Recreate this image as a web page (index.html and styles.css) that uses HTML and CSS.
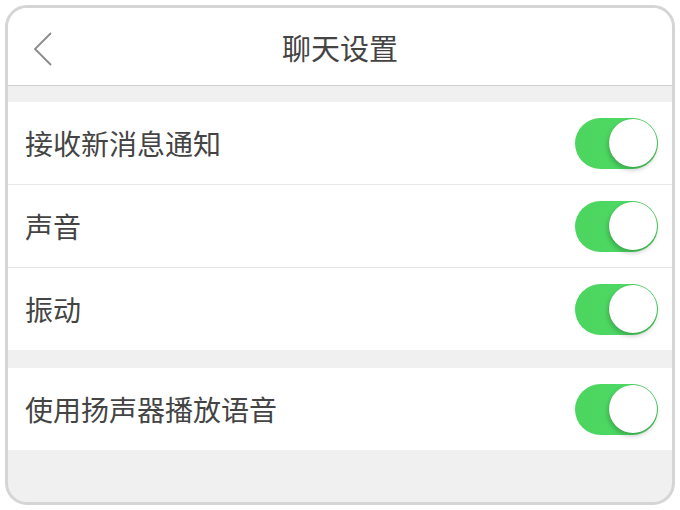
FILE: index.html
```html
<!DOCTYPE html>
<html lang="zh">
<head>
<meta charset="utf-8">
<link rel="stylesheet" href="styles.css">
</head>
<body>
<div class="phone">
  <header class="nav">
    <span class="back">
      <svg width="20" height="34" viewBox="0 0 20 34"><polyline points="18,1 2,17 18,33" fill="none" stroke="#8a8a8a" stroke-width="1.8"/></svg>
    </span>
    <h1 class="title">聊天设置</h1>
  </header>
  <div class="gap"></div>
  <div class="group">
    <div class="row"><span class="label">接收新消息通知</span><span class="switch"><span class="knob"></span></span></div>
    <div class="row"><span class="label">声音</span><span class="switch"><span class="knob"></span></span></div>
    <div class="row"><span class="label">振动</span><span class="switch"><span class="knob"></span></span></div>
  </div>
  <div class="gap gap2"></div>
  <div class="group">
    <div class="row"><span class="label">使用扬声器播放语音</span><span class="switch"><span class="knob"></span></span></div>
  </div>
</div>
</body>
</html>
```

FILE: styles.css
```css
html, body {
  margin: 0;
  padding: 0;
  background: #ffffff;
}
body {
  padding: 5px;
  font-family: "Noto Sans CJK SC", "Noto Sans", sans-serif;
}
.phone {
  width: 670px;
  height: 500px;
  box-sizing: border-box;
  border: 3px solid #d5d5d5;
  border-radius: 22px;
  overflow: hidden;
  background: #f0f0f0;
  display: flex;
  flex-direction: column;
}
.nav {
  height: 77px;
  flex: none;
  background: #ffffff;
  border-bottom: 1px solid #cfcfcf;
  display: flex;
  align-items: center;
  justify-content: center;
  position: relative;
}
.back {
  position: absolute;
  left: 25px;
  top: 24px;
  display: flex;
}
.title {
  margin: 0;
  font-size: 29px;
  font-weight: normal;
  color: #444444;
  line-height: 1;
  padding-top: 2px;
}
.gap {
  height: 16px;
  flex: none;
}
.gap2 {
  height: 18px;
}
.group {
  background: #ffffff;
}
.row {
  height: 82px;
  display: flex;
  align-items: center;
  justify-content: space-between;
  padding: 0 14px 0 17px;
  border-bottom: 1px solid #e6e6e6;
}
.row:last-child {
  border-bottom: none;
}
.label {
  font-size: 28px;
  color: #444444;
  line-height: 1;
}
.switch {
  width: 83px;
  height: 51px;
  border-radius: 26px;
  background: linear-gradient(90deg, #4cd55f 0%, #4dd964 60%, #47d35c 100%);
  position: relative;
  flex: none;
}
.knob {
  position: absolute;
  right: 1px;
  top: 1px;
  width: 48px;
  height: 48px;
  border-radius: 50%;
  background: #ffffff;
  box-shadow: -1px 3px 5px rgba(0,0,0,0.22), 0 0 0 0.5px rgba(0,0,0,0.06);
}
```
